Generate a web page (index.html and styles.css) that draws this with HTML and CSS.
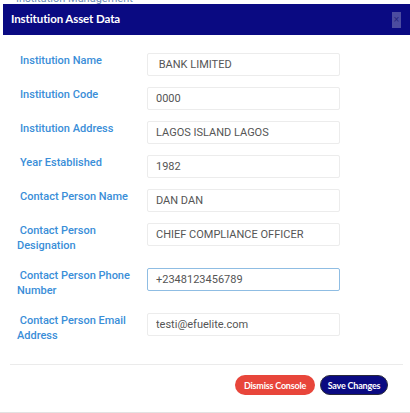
FILE: index.html
```html
<!DOCTYPE html>
<html lang="en">
<head>
    <meta charset="UTF-8">
    <meta name="viewport" content="width=device-width, initial-scale=1.0">
    <title>Institution Asset Data</title>
    <link rel="stylesheet" href="styles.css">
</head>
<body>
    <div class="backdrop-title"><span>Institution Management</span></div>

    <div class="modal">
        <div class="modal-header">
            <h2>Institution Asset Data</h2>
            <button class="close-btn">&times;</button>
        </div>

        <form class="modal-body">
            <div class="form-row">
                <label>Institution Name</label>
                <input type="text" class="form-input" value=" BANK LIMITED">
            </div>
            <div class="form-row">
                <label>Institution Code</label>
                <input type="text" class="form-input" value="0000">
            </div>
            <div class="form-row">
                <label>Institution Address</label>
                <input type="text" class="form-input" value="LAGOS ISLAND LAGOS">
            </div>
            <div class="form-row">
                <label>Year Established</label>
                <input type="text" class="form-input" value="1982">
            </div>
            <div class="form-row">
                <label>Contact Person Name</label>
                <input type="text" class="form-input" value="DAN DAN">
            </div>
            <div class="form-row">
                <label class="shifted">&nbsp;Contact Person Designation</label>
                <input type="text" class="form-input" value="CHIEF COMPLIANCE OFFICER">
            </div>
            <div class="form-row">
                <label class="shifted">&nbsp;Contact Person Phone Number</label>
                <input type="text" class="form-input focused" value="+2348123456789">
            </div>
            <div class="form-row">
                <label class="shifted">&nbsp;Contact Person Email Address</label>
                <input type="text" class="form-input" value="testi@efuelite.com">
            </div>
        </form>

        <div class="modal-footer">
            <button class="btn btn-dismiss">Dismiss Console</button>
            <button class="btn btn-save">Save Changes</button>
        </div>
    </div>
</body>
</html>
```

FILE: styles.css
```css
* {
    margin: 0;
    padding: 0;
    box-sizing: border-box;
}

:root {
    --navy: #0a0a82;
    --label-blue: #3a8ed8;
    --input-border: #ececec;
    --text-gray: #555;
}

body {
    background: #fff;
    font-family: Roboto, "Liberation Sans", sans-serif;
    width: 410px;
    height: 413px;
    overflow: hidden;
    border-bottom: 1px solid #e2e2e2;
}

.backdrop-title {
    height: 4px;
    overflow: hidden;
    padding-left: 16px;
}

.backdrop-title span {
    display: block;
    margin-top: -7px;
    font-size: 11px;
    line-height: 11px;
    color: #6f8fb8;
}

.modal {
    margin-left: 3px;
    height: 408px;
    display: flex;
    flex-direction: column;
}

.modal-header {
    background: var(--navy);
    height: 31px;
    display: flex;
    align-items: center;
    justify-content: space-between;
    padding: 0 9px 0 8px;
}

.modal-header h2 {
    color: #fff;
    font-family: Lato, "Liberation Sans", sans-serif;
    font-size: 11.5px;
    font-weight: 700;
    letter-spacing: -0.1px;
    margin-top: -3px;
}

.close-btn {
    width: 9px;
    height: 16px;
    border: none;
    background: #4c4ca0;
    color: #23237a;
    font-size: 10px;
    line-height: 16px;
    margin-top: 1px;
}

.modal-body {
    padding: 18px 0 0 17px;
    display: flex;
    flex-direction: column;
    gap: 11px;
}

.form-row {
    display: flex;
    align-items: flex-start;
}

.form-row label {
    width: 127px;
    padding-right: 10px;
    font-size: 11px;
    font-weight: 500;
    line-height: 15px;
    color: var(--label-blue);
    padding-bottom: 4px;
}

.form-row label.shifted {
    margin-left: -3px;
    width: 130px;
    padding-right: 14px;
}

.form-input {
    width: 193px;
    height: 23px;
    border: 1px solid var(--input-border);
    border-radius: 2px;
    padding: 0 8px;
    font-family: Roboto, "Liberation Sans", sans-serif;
    font-size: 11px;
    color: var(--text-gray);
    background: #fff;
}

.form-input.focused {
    border-color: #8fbde3;
}

.modal-footer {
    margin: 17px 7px 0 7px;
    border-top: 1px solid #ebebeb;
    padding: 10px 15px 0 0;
    display: flex;
    justify-content: flex-end;
    gap: 5px;
}

.btn {
    height: 20px;
    border-radius: 10px;
    border: none;
    color: #fff;
    font-family: Lato, "Liberation Sans", sans-serif;
    font-size: 9px;
    font-weight: 700;
    letter-spacing: -0.2px;
    cursor: pointer;
}

.btn-dismiss {
    width: 80px;
    background: #e8463b;
}

.btn-save {
    width: 68px;
    background: var(--navy);
    border: 1px solid #2a2a3a;
}
```
